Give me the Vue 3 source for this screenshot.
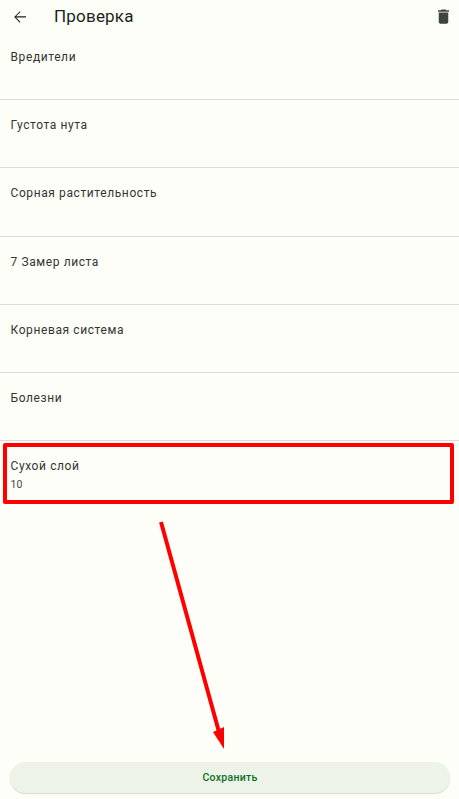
<script setup>
const items = [
  { title: 'Вредители' },
  { title: 'Густота нута' },
  { title: 'Сорная растительность' },
  { title: '7 Замер листа' },
  { title: 'Корневая система' },
  { title: 'Болезни' },
  { title: 'Сухой слой', value: '10' }
]
</script>

<template>
  <div class="screen">
    <header class="topbar">
      <svg class="back" width="18" height="18" viewBox="0 0 24 24">
        <path d="M20 11.100H6.800l5.900-5.900-.95-.95L4.250 12l7.500 7.750.95-.95-5.900-6.100H20v-1.600z" fill="#1d1f1c" />
      </svg>
      <h1 class="title">Проверка</h1>
      <svg class="trash" width="19" height="19" viewBox="0 0 24 24">
        <path d="M6 19c0 1.100.9 2 2 2h8c1.100 0 2-.9 2-2V7H6v12zM19 4h-3.500l-1-1h-5l-1 1H5v2h14V4z" fill="#3e443f" />
      </svg>
    </header>

    <ul class="list">
      <li v-for="item in items" :key="item.title" class="row">
        <div class="row-title">{{ item.title }}</div>
        <div v-if="item.value" class="row-value">{{ item.value }}</div>
      </li>
    </ul>

    <div class="footer">
      <button class="save-btn">Сохранить</button>
    </div>

    <div class="mark-box"></div>
    <svg class="mark-arrow" width="459" height="799" viewBox="0 0 459 799">
      <line x1="161" y1="522" x2="219" y2="732" stroke="#ff0000" stroke-width="4" />
      <polygon points="213,732 224,727 224,749" fill="#ff0000" />
    </svg>
  </div>
</template>

<style>
html,
body {
  margin: 0;
  background: #fdfef8;
}
</style>

<style scoped>
.screen {
  position: relative;
  width: 459px;
  height: 799px;
  overflow: hidden;
  display: flex;
  flex-direction: column;
  background: #fdfef8;
  font-family: Roboto, "Noto Sans", sans-serif;
  color: #1d1f1c;
}

.topbar {
  height: 32px;
  flex-shrink: 0;
  display: flex;
  align-items: center;
  padding: 0 6px 0 11px;
}

.back {
  margin-top: 1px;
}

.title {
  flex: 1;
  margin: 0 0 0 25px;
  font-size: 17px;
  font-weight: 400;
  letter-spacing: 0.2px;
}

.trash {
  margin-top: 1px;
}

.list {
  list-style: none;
  margin: 0;
  padding: 0;
  flex: 1;
}

.row {
  height: 68.200px;
  box-sizing: border-box;
  padding: 16px 10.500px 0;
  border-bottom: 1px solid #dcddd8;
}

.row:last-child {
  border-bottom: none;
}

.row-title {
  font-size: 12px;
  line-height: 18px;
  letter-spacing: 0.6px;
  color: #333532;
}

.row-value {
  font-size: 10.500px;
  line-height: 16px;
  margin-top: 2px;
  color: #444743;
}

.footer {
  padding: 0 9px 6px 10px;
}

.save-btn {
  display: block;
  width: 100%;
  height: 31px;
  border: none;
  border-radius: 16px;
  background: #eef3ea;
  box-shadow: 0 1px 1px rgba(0, 0, 0, 0.15);
  font-family: inherit;
  font-size: 10.500px;
  font-weight: 500;
  letter-spacing: 0.3px;
  color: #0b6e1d;
}

.mark-box {
  position: absolute;
  left: 3px;
  top: 443px;
  width: 451px;
  height: 61px;
  box-sizing: border-box;
  border: 4px solid #ff0000;
  border-radius: 2px;
}

.mark-arrow {
  position: absolute;
  left: 0;
  top: 0;
  pointer-events: none;
}
</style>
